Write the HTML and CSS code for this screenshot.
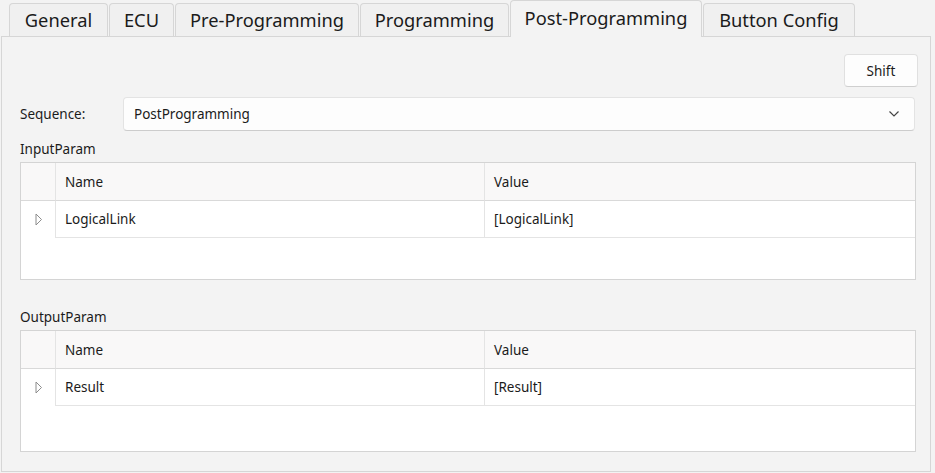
FILE: index.html
```html
<!DOCTYPE html>
<html lang="en">
<head>
<meta charset="UTF-8">
<title>Post-Programming</title>
<link rel="stylesheet" href="styles.css">
</head>
<body>

<div class="tabs">
    <div class="tab">General</div>
    <div class="tab">ECU</div>
    <div class="tab">Pre-Programming</div>
    <div class="tab">Programming</div>
    <div class="tab selected">Post-Programming</div>
    <div class="tab">Button Config</div>
</div>

<div class="panel">
    <div class="toolbar">
        <button class="btn">Shift</button>
    </div>

    <div class="seq-row">
        <span class="seq-label">Sequence:</span>
        <div class="combo">
            <span>PostProgramming</span>
            <svg width="12" height="8" viewBox="0 0 12 8"><path d="M1.5 1.5 L6 6 L10.5 1.5" fill="none" stroke="#444" stroke-width="1.2"/></svg>
        </div>
    </div>

    <div class="group-label">InputParam</div>
    <div class="grid-table">
        <div class="cell head first"></div>
        <div class="cell head">Name</div>
        <div class="cell head">Value</div>
        <div class="cell expander">
            <svg width="8" height="13" viewBox="0 0 8 13"><path d="M1 1 L6.5 6.5 L1 12 Z" fill="none" stroke="#8c8c8c" stroke-width="1"/></svg>
        </div>
        <div class="cell data">LogicalLink</div>
        <div class="cell data">[LogicalLink]</div>
    </div>

    <div class="group-label second">OutputParam</div>
    <div class="grid-table tall">
        <div class="cell head first"></div>
        <div class="cell head">Name</div>
        <div class="cell head">Value</div>
        <div class="cell expander">
            <svg width="8" height="13" viewBox="0 0 8 13"><path d="M1 1 L6.5 6.5 L1 12 Z" fill="none" stroke="#8c8c8c" stroke-width="1"/></svg>
        </div>
        <div class="cell data">Result</div>
        <div class="cell data">[Result]</div>
    </div>
</div>

</body>
</html>
```

FILE: styles.css
```css
body, html {
    margin: 0;
    padding: 0;
    background: #f3f3f3;
    font-family: "Noto Sans", "Open Sans", sans-serif;
    color: #1b1b1b;
}

/* tab strip */
.tabs {
    display: flex;
    align-items: flex-end;
    height: 36px;
    padding-left: 9px;
}

.tab {
    box-sizing: border-box;
    height: 33px;
    line-height: 32px;
    text-align: center;
    font-size: 18.3px;
    background: #f0f0f0;
    border: 1px solid #d6d6d6;
    border-bottom: none;
    border-radius: 4px 4px 0 0;
    margin-right: 1px;
    color: #1b1b1b;
}

.tab:nth-child(1) { width: 99px; }
.tab:nth-child(2) { width: 65px; }
.tab:nth-child(3) { width: 184px; }
.tab:nth-child(4) { width: 149px; }
.tab:nth-child(5) { width: 192px; }
.tab:nth-child(6) { width: 152px; }

.tab.selected {
    height: 37px;
    line-height: 34px;
    background: #f3f3f3;
    margin-bottom: -1px;
    position: relative;
    z-index: 1;
}

/* main panel */
.panel {
    margin-left: 1px;
    width: 930px;
    height: 436px;
    border: 1px solid #d6d6d6;
    background: #f3f3f3;
    box-sizing: border-box;
    padding: 17px 14px 0 18px;
    font-size: 13.5px;
}

.toolbar {
    display: flex;
    justify-content: flex-end;
    margin-right: -2px;
}

.btn {
    width: 74px;
    height: 33px;
    background: #fdfdfd;
    border: 1px solid #e0e0e0;
    border-bottom-color: #cfcfcf;
    border-radius: 4px;
    font-family: inherit;
    font-size: 13.5px;
    color: #1b1b1b;
}

.seq-row {
    display: flex;
    align-items: center;
    margin-top: 10px;
    height: 34px;
}

.seq-label {
    width: 103px;
}

.combo {
    flex: 1;
    height: 34px;
    box-sizing: border-box;
    background: #fdfdfd;
    border: 1px solid #e3e3e3;
    border-bottom-color: #cccccc;
    border-radius: 4px;
    display: flex;
    align-items: center;
    justify-content: space-between;
    padding: 0 14px 0 10px;
    margin-right: 1px;
}

.group-label {
    margin-top: 6px;
    height: 25px;
    line-height: 24px;
}

.group-label.second {
    margin-top: 25px;
}

.grid-table {
    display: grid;
    grid-template-columns: 34px 429px 1fr;
    grid-template-rows: 38px 37px;
    height: 118px;
    box-sizing: border-box;
    background: #ffffff;
    border: 1px solid #d4d4d4;
    align-content: start;
}

.grid-table.tall {
    height: 122px;
}

.cell {
    display: flex;
    align-items: center;
    padding-left: 9px;
}

.head {
    background: #f9f8f8;
    border-bottom: 1px solid #d9d9d9;
    border-left: 1px solid #e4e4e4;
}

.head.first {
    border-left: none;
}

.expander {
    padding-left: 14px;
}

.data {
    border-bottom: 1px solid #e4e4e4;
    border-left: 1px solid #e4e4e4;
}
```
